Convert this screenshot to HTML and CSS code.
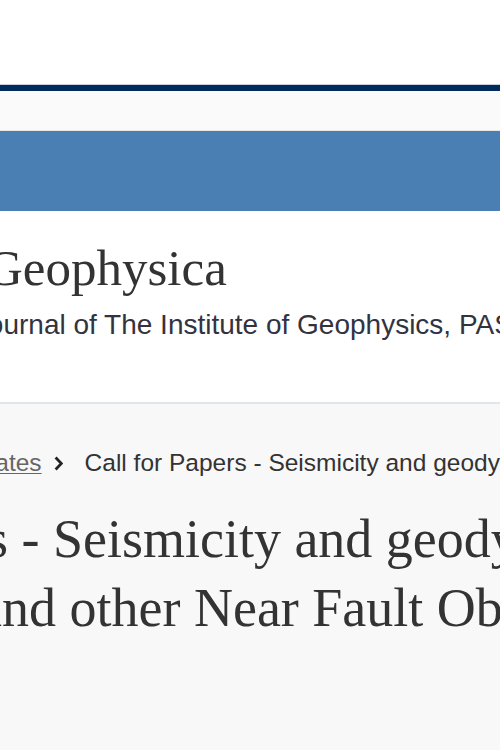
FILE: index.html
```html
<!DOCTYPE html>
<html lang="en">
<head>
<meta charset="utf-8">
<title>Call for Papers - Acta Geophysica</title>
<link rel="stylesheet" href="styles.css">
</head>
<body>
<div class="page">
  <header class="site-header">
    <div class="topbar"></div>
    <div class="brand-strip"></div>
    <nav class="navbar"></nav>
    <div class="banner"></div>
  </header>

  <section class="journal-header">
    <h2 class="journal-title">Acta Geophysica</h2>
    <p class="journal-subtitle">Official Journal of The Institute of Geophysics, PAS</p>
  </section>

  <main class="main">
    <nav class="breadcrumbs" aria-label="breadcrumbs">
      <a class="crumb-link" href="#">Home</a>
      <svg class="chev" width="9" height="15" viewBox="0 0 9 15" aria-hidden="true"><path d="M1.6 1.5 L7.4 7.5 L1.6 13.5" fill="none" stroke="#222" stroke-width="2.8"/></svg>
      <a class="crumb-link" href="#">Acta Geophysica</a>
      <svg class="chev" width="9" height="15" viewBox="0 0 9 15" aria-hidden="true"><path d="M1.6 1.5 L7.4 7.5 L1.6 13.5" fill="none" stroke="#222" stroke-width="2.8"/></svg>
      <a class="crumb-link" href="#">News and Updates</a>
      <svg class="chev" width="9" height="15" viewBox="0 0 9 15" aria-hidden="true"><path d="M1.6 1.5 L7.4 7.5 L1.6 13.5" fill="none" stroke="#222" stroke-width="2.8"/></svg>
      <span class="crumb-current">Call for Papers - Seismicity and geodynamics of active faults</span>
    </nav>
    <h1 class="article-title">Call for Papers - Seismicity and geodynamics of active faults: seismological, geodetic<br>and other Near Fault Observations</h1>
  </main>
</div>
</body>
</html>
```

FILE: styles.css
```css
html, body {
  margin: 0;
  padding: 0;
}

body {
  background: #f8f8f8;
  overflow: hidden;
  width: 500px;
  height: 750px;
}

.page {
  width: 500px;
}

.topbar {
  height: 84px;
  background: #ffffff;
  border-bottom: 1px solid #c6d0dc;
}

.brand-strip {
  height: 6px;
  background: #012a5e;
}

.navbar {
  height: 39px;
  background: #fafafa;
  border-bottom: 1px solid #e6e6e6;
}

.banner {
  height: 80px;
  background: #4a7fb3;
}

.journal-header {
  background: #ffffff;
  height: 193px;
  box-sizing: border-box;
  padding-top: 27px;
  border-bottom: 2px solid #dfe6ee;
  white-space: nowrap;
}

.journal-title {
  margin: 0;
  font-family: "Liberation Serif", "Times New Roman", serif;
  font-weight: normal;
  font-size: 51px;
  line-height: 61px;
  color: #333333;
  text-indent: -123px;
}

.journal-subtitle {
  margin: 10px 0 0;
  font-family: "Liberation Sans", Arial, sans-serif;
  font-size: 28px;
  line-height: 32px;
  color: #333340;
  text-indent: -119px;
}

.main {
  background: #f8f8f8;
  padding-top: 43px;
  white-space: nowrap;
}

.breadcrumbs {
  display: flex;
  align-items: center;
  margin-left: -502px;
  font-family: "Liberation Sans", Arial, sans-serif;
  font-size: 24.5px;
  line-height: 32px;
}

.crumb-link {
  color: #666666;
  text-decoration: underline;
  text-underline-offset: 2px;
  text-decoration-thickness: 1px;
}

.chev {
  flex: none;
  margin: 0 22px 0 12px;
}

.crumb-current {
  color: #333333;
}

.article-title {
  margin: 26px 0 0 -22px;
  font-family: "Liberation Serif", "Times New Roman", serif;
  font-weight: normal;
  font-size: 54px;
  line-height: 69px;
  color: #333333;
  text-indent: -294px;
}
```
